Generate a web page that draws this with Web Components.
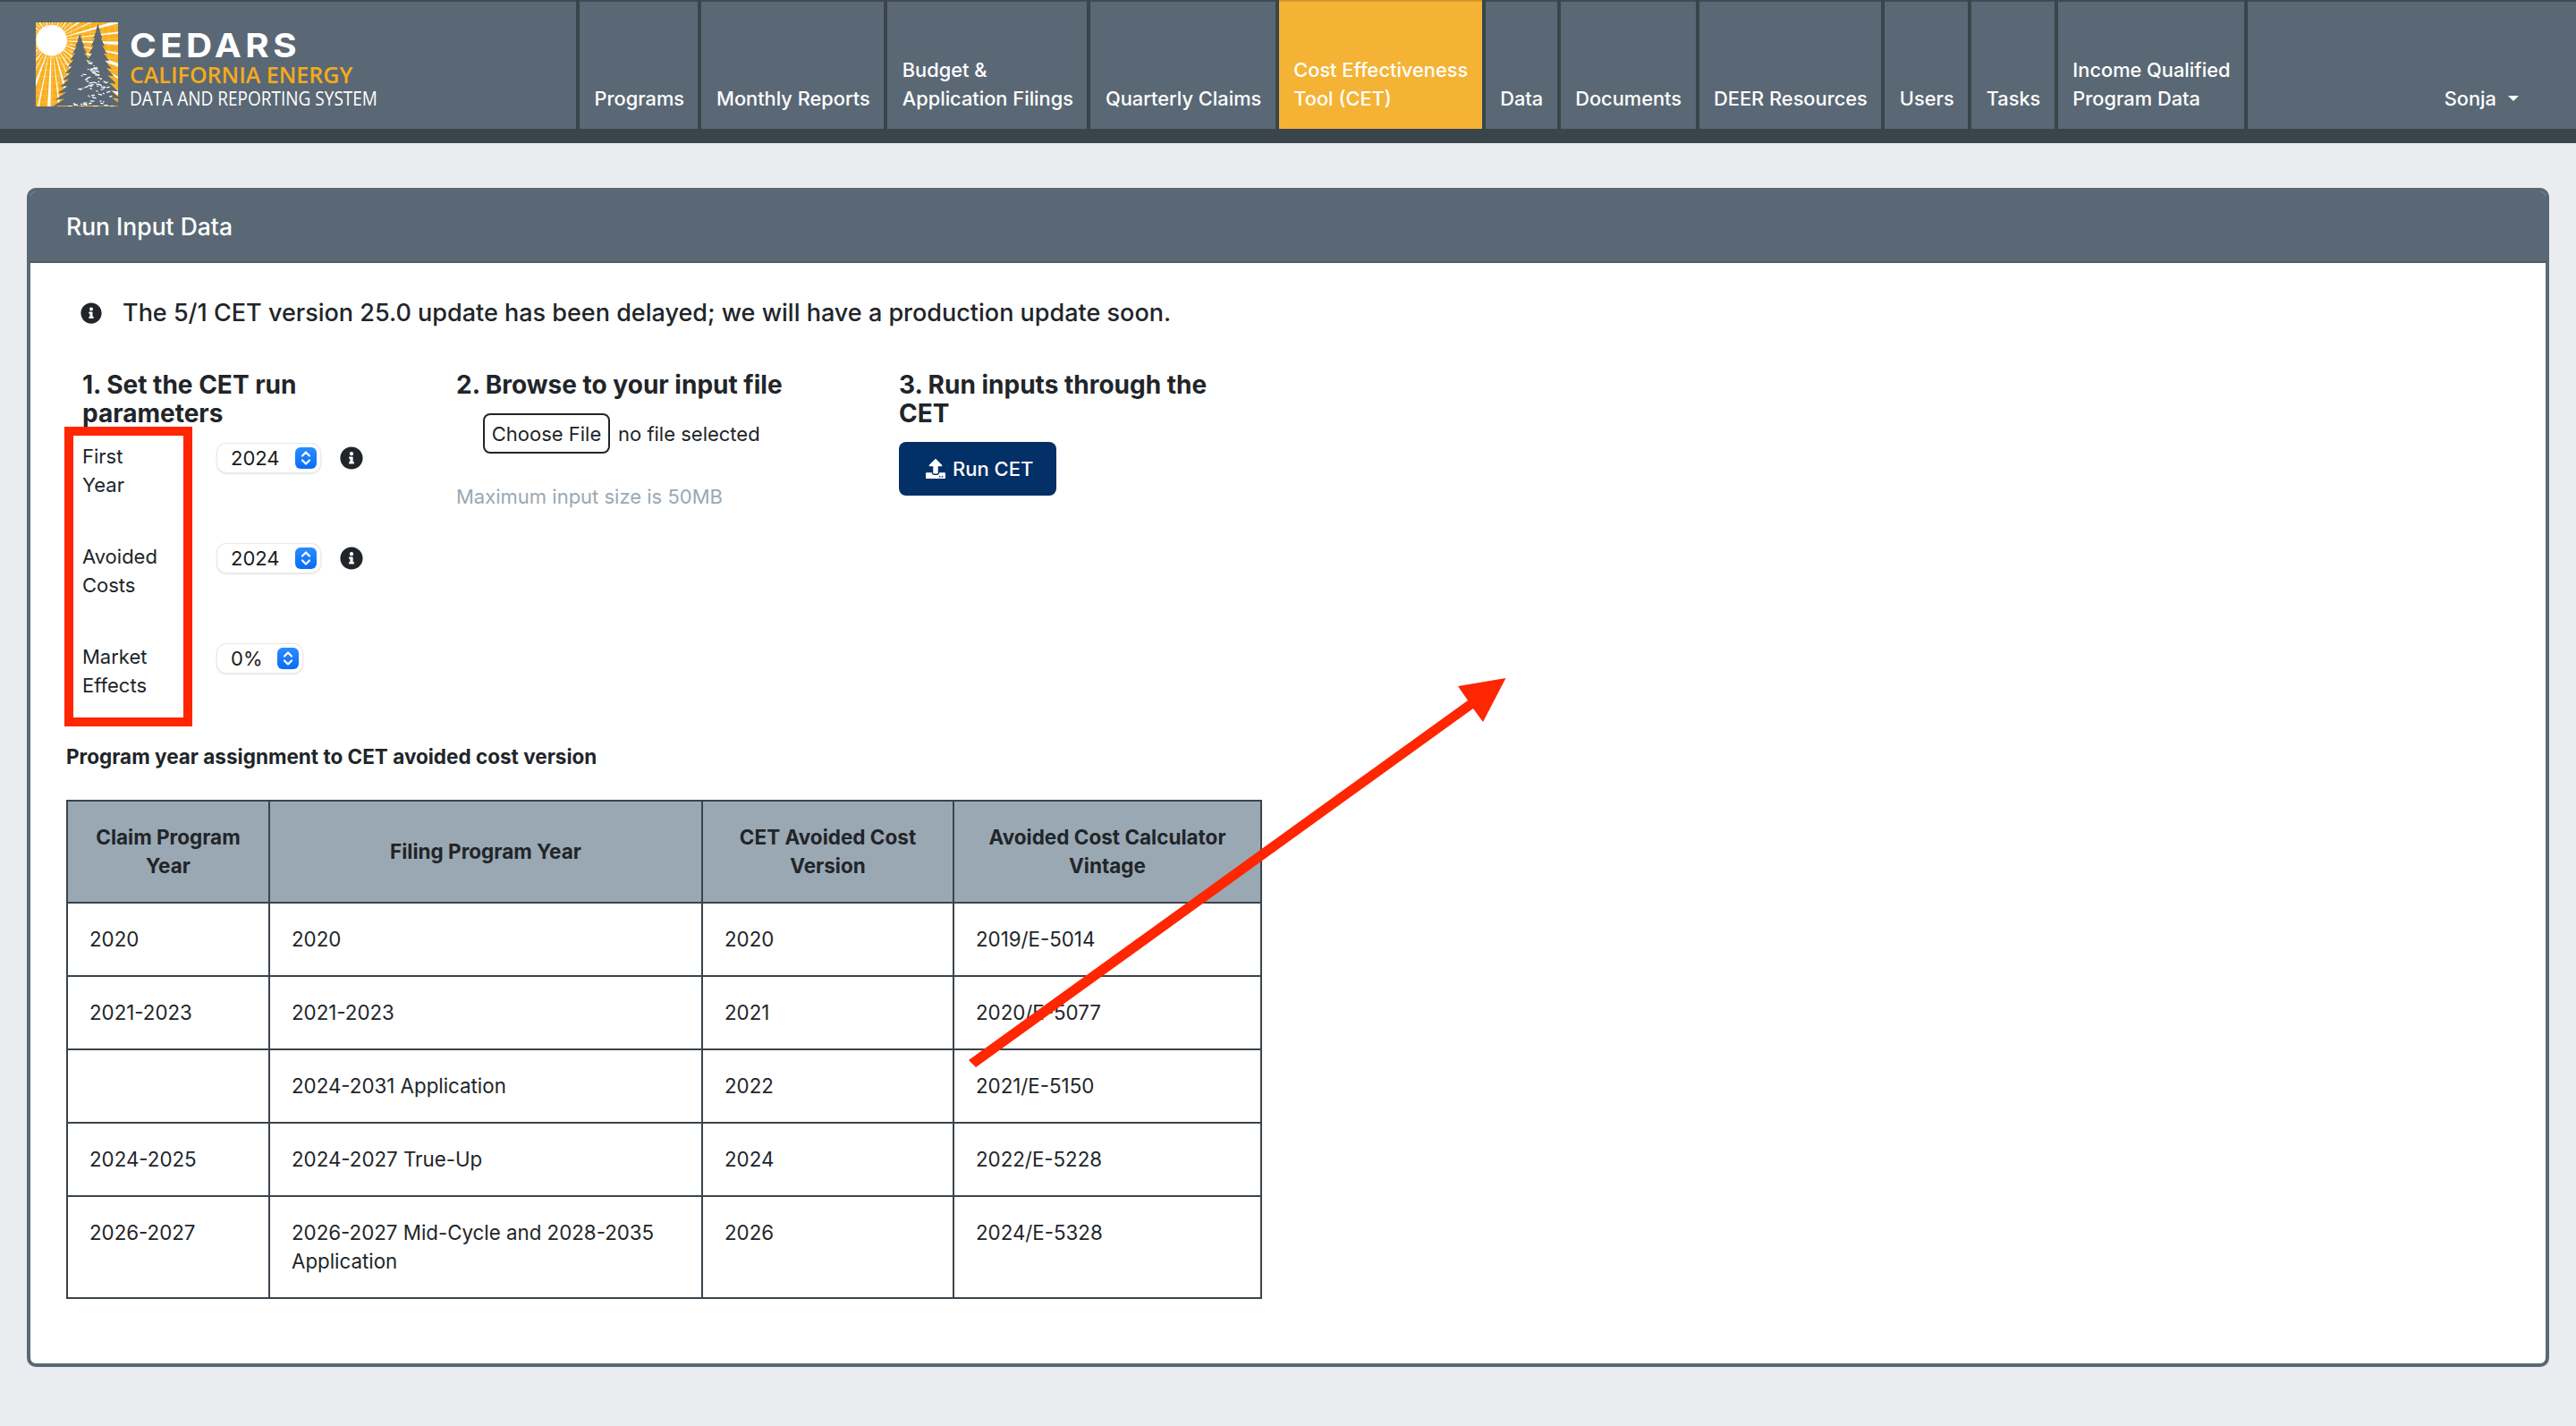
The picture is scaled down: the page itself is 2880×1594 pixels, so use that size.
<!DOCTYPE html>
<html>
<head>
<meta charset="utf-8">
<title>CEDARS - Run Input Data</title>
<style>
html, body { margin: 0; padding: 0; }
body {
  position: relative;
  min-height: 1594px;
  background: #ebecf0;
  color: #212529;
  font: 400 22px/32px Inter, "Liberation Sans", sans-serif;
}
</style>
</head>
<body>
<cedars-header>
  <nav-item>Programs</nav-item>
  <nav-item>Monthly Reports</nav-item>
  <nav-item>Budget &amp;<br>Application Filings</nav-item>
  <nav-item>Quarterly Claims</nav-item>
  <nav-item active>Cost Effectiveness<br>Tool (CET)</nav-item>
  <nav-item>Data</nav-item>
  <nav-item>Documents</nav-item>
  <nav-item>DEER Resources</nav-item>
  <nav-item>Users</nav-item>
  <nav-item>Tasks</nav-item>
  <nav-item>Income Qualified<br>Program Data</nav-item>
</cedars-header>

<run-card title="Run Input Data">
  <run-notice>The 5/1 CET version 25.0 update has been delayed; we will have a production update soon.</run-notice>
  <run-steps>
    <run-step slot="one" heading="1. Set the CET run parameters">
      <param-row label="First Year" value="2024" info></param-row>
      <param-row label="Avoided Costs" value="2024" info></param-row>
      <param-row label="Market Effects" value="0%"></param-row>
    </run-step>
    <run-step slot="two" heading="2. Browse to your input file">
      <file-picker></file-picker>
    </run-step>
    <run-step slot="three" heading="3. Run inputs through the CET">
      <run-button>Run CET</run-button>
    </run-step>
  </run-steps>
  <assignment-table></assignment-table>
</run-card>

<annotation-layer></annotation-layer>

<script>
const INFO_PATH = "M256 8C119.043 8 8 119.083 8 256c0 136.997 111.043 248 248 248s248-111.003 248-248C504 119.083 392.957 8 256 8zm0 110c23.196 0 42 18.804 42 42s-18.804 42-42 42-42-18.804-42-42 18.804-42 42-42zm56 254c0 6.627-5.373 12-12 12h-88c-6.627 0-12-5.373-12-12v-24c0-6.627 5.373-12 12-12h12v-64h-12c-6.627 0-12-5.373-12-12v-24c0-6.627 5.373-12 12-12h64c6.627 0 12 5.373 12 12v100h12c6.627 0 12 5.373 12 12v24z"
const UPLOAD_PATH = "M296 384h-80c-13.3 0-24-10.7-24-24V192h-87.7c-17.8 0-26.7-21.5-14.1-34.1L242.3 5.7c7.5-7.5 19.8-7.5 27.3 0l152.2 152.2c12.6 12.6 3.7 34.1-14.1 34.1H320v168c0 13.3-10.7 24-24 24zm216-8v112c0 13.3-10.7 24-24 24H24c-13.3 0-24-10.7-24-24V376c0-13.3 10.7-24 24-24h136v8c0 30.9 25.1 56 56 56h80c30.9 0 56-25.1 56-56v-8h136c13.3 0 24 10.7 24 24zm-124 88c0-11-9-20-20-20s-20 9-20 20 9 20 20 20 20-9 20-20zm64 0c0-11-9-20-20-20s-20 9-20 20 9 20 20 20 20-9 20-20z"

// Logo artwork: sun rays, grid and two jagged trees
function logoArt() {
  let rays = ""
  for (let i = 0; i < 40; i++) {
    const a = i * Math.PI / 20 + 0.04
    const w = i % 2 ? 0.012 : 0.024
    const r = 130
    const x1 = 17.5 + r * Math.cos(a - w), y1 = 20 + r * Math.sin(a - w)
    const x2 = 17.5 + r * Math.cos(a + w), y2 = 20 + r * Math.sin(a + w)
    rays += `<polygon points="17.5,20 ${x1.toFixed(1)},${y1.toFixed(1)} ${x2.toFixed(1)},${y2.toFixed(1)}" fill="#fff"/>`
  }
  let grid = ""
  for (let i = 4; i < 92; i += 7) {
    grid += `<path d="M${i} 0V93M0 ${i}H91" stroke="#fff" stroke-opacity=".35" stroke-width=".6"/>`
  }
  const tree = (cx, top, bottom, spread) => {
    let left = [], right = []
    const tiers = 11
    for (let i = 1; i <= tiers; i++) {
      const t = i / tiers
      const y = top + (bottom - top) * t
      const w = spread * t
      const back = w * 0.62
      right.push(`${(cx + w).toFixed(1)},${y.toFixed(1)}`, `${(cx + back).toFixed(1)},${(y - 1).toFixed(1)}`)
      left.unshift(`${(cx - back).toFixed(1)},${(y - 1).toFixed(1)}`, `${(cx - w).toFixed(1)},${y.toFixed(1)}`)
    }
    return `<polygon fill="#5a6875" points="${cx},${top} ${right.join(" ")} ${left.join(" ")}"/>`
  }
  let flecks = ""
  let seed = 11
  const rnd = () => (seed = (seed * 137 + 59) % 1009) / 1009
  for (let i = 0; i < 70; i++) {
    const y = 42 + rnd() * 50
    const x = 60 - (y - 30) * 0.35 + rnd() * (y - 30) * 0.8
    flecks += `<rect x="${x.toFixed(1)}" y="${y.toFixed(1)}" width="${(1 + rnd() * 4).toFixed(1)}" height="1.2" fill="#fff" transform="rotate(${(rnd() * 50 - 25).toFixed(0)} ${x.toFixed(1)} ${y.toFixed(1)})"/>`
  }
  return `<svg width="92" height="94" viewBox="0 0 91 93" part="logo">
    <rect width="91" height="93" fill="#f9ae1b"/>${grid}${rays}
    <circle cx="17.5" cy="20" r="17" fill="#fff"/>
    ${tree(68.7, 1.5, 93, 28)}${tree(48.7, 13, 93, 30)}
    ${flecks}
  </svg>`
}

class CedarsHeader extends HTMLElement {
  constructor() {
    super()
    const shadow = this.attachShadow({ mode: "open" })
    shadow.innerHTML = `
      <style>
        :host {
          display: flex;
          height: 160px;
          background: #3a444b;
          box-sizing: border-box;
        }
        .bar {
          flex: 1;
          display: flex;
          height: 144px;
          background: #5a6875;
          box-shadow: inset 0 2px 0 #3f4a52;
        }
        .brand {
          width: 644px;
          box-sizing: border-box;
          padding: 25px 0 0 40px;
          display: flex;
          gap: 13px;
          flex: none;
        }
        .brand svg { display: block; flex: none; }
        .words { color: #fff; white-space: nowrap; }
        .words span { display: block; transform-origin: left center; }
        .cedars {
          margin-top: 7px;
          font: 700 37px/37px Inter, "Liberation Sans", sans-serif;
          letter-spacing: 4px;
          transform: scaleX(1.09);
        }
        .california {
          margin-top: 2px;
          font: 600 25px/25px "Open Sans", "Liberation Sans", sans-serif;
          color: #f5ab1c;
        }
        .system {
          margin-top: 3px;
          font: 400 21px/23px "Open Sans", "Liberation Sans", sans-serif;
          transform: scaleX(.905);
        }
        nav { display: flex; }
        .user {
          flex: 1;
          border-left: 4px solid #3a444b;
          display: flex;
          justify-content: flex-end;
          align-items: flex-end;
          padding: 0 64px 18px 0;
          color: #fff;
          font: 500 21.8px/32px Inter, "Liberation Sans", sans-serif;
        }
        .caret {
          margin: 0 0 13px 13px;
          border-top: 6px solid #fff;
          border-left: 6px solid transparent;
          border-right: 6px solid transparent;
        }
      </style>
      <div class="bar">
        <div class="brand">
          ${logoArt()}
          <div class="words">
            <span class="cedars">CEDARS</span>
            <span class="california">CALIFORNIA ENERGY</span>
            <span class="system">DATA AND REPORTING SYSTEM</span>
          </div>
        </div>
        <nav><slot></slot></nav>
        <div class="user">Sonja<span class="caret"></span></div>
      </div>
    `
  }
}

class NavItem extends HTMLElement {
  constructor() {
    super()
    const shadow = this.attachShadow({ mode: "open" })
    shadow.innerHTML = `
      <style>
        :host {
          display: flex;
          align-items: flex-end;
          box-sizing: border-box;
          height: 144px;
          padding: 0 15.5px 18px 16.5px;
          border-left: 4px solid #3a444b;
          color: #fff;
          font: 500 21.8px/32px Inter, "Liberation Sans", sans-serif;
          white-space: nowrap;
        }
        :host([active]) {
          background: #f5b335;
          box-shadow: inset 0 2px 0 #d9982a;
        }
      </style>
      <div><slot></slot></div>
    `
  }
}

class RunCard extends HTMLElement {
  constructor() {
    super()
    const shadow = this.attachShadow({ mode: "open" })
    shadow.innerHTML = `
      <style>
        :host {
          display: block;
          box-sizing: border-box;
          margin: 50px 30px 0;
          height: 1318px;
          border: 4px solid #5a6875;
          border-radius: 10px;
          background: #fff;
          overflow: hidden;
        }
        header {
          box-sizing: border-box;
          height: 80px;
          padding: 0 0 0 40px;
          display: flex;
          align-items: center;
          background: #5a6875;
          border-bottom: 2px solid #4f5c68;
          color: #fff;
          font: 500 26.5px/32px Inter, "Liberation Sans", sans-serif;
        }
        .body { padding: 40px 40px 0; }
      </style>
      <header>${this.getAttribute("title")}</header>
      <div class="body"><slot></slot></div>
    `
  }
}

class RunNotice extends HTMLElement {
  constructor() {
    super()
    const shadow = this.attachShadow({ mode: "open" })
    shadow.innerHTML = `
      <style>
        :host {
          display: flex;
          align-items: center;
          gap: 23px;
          padding-left: 16px;
          font: 500 27px/32px Inter, "Liberation Sans", sans-serif;
          color: #212529;
        }
        svg { width: 24px; height: 24px; fill: #212529; flex: none; }
      </style>
      <svg viewBox="0 0 512 512"><path d="${INFO_PATH}"/></svg>
      <div><slot></slot></div>
    `
  }
}

class RunSteps extends HTMLElement {
  constructor() {
    super()
    const shadow = this.attachShadow({ mode: "open" })
    shadow.innerHTML = `
      <style>
        :host {
          display: grid;
          grid-template-columns: 418px 495px 375px;
          margin: 48px 0 0 18px;
        }
      </style>
      <slot name="one"></slot>
      <slot name="two"></slot>
      <slot name="three"></slot>
    `
  }
}

class RunStep extends HTMLElement {
  constructor() {
    super()
    const shadow = this.attachShadow({ mode: "open" })
    shadow.innerHTML = `
      <style>
        :host { display: block; }
        h3 {
          margin: 0;
          max-width: 375px;
          font: 700 28px/32px Inter, "Liberation Sans", sans-serif;
          color: #212529;
        }
      </style>
      <h3>${this.getAttribute("heading")}</h3>
      <slot></slot>
    `
  }
}

class ParamRow extends HTMLElement {
  constructor() {
    super()
    const shadow = this.attachShadow({ mode: "open" })
    const info = this.hasAttribute("info")
      ? `<svg class="info" viewBox="0 0 512 512"><path d="${INFO_PATH}"/></svg>` : ""
    shadow.innerHTML = `
      <style>
        :host {
          display: flex;
          align-items: flex-start;
          height: 112px;
          font: 400 22px/32px Inter, "Liberation Sans", sans-serif;
          color: #212529;
        }
        :host(:first-of-type) { margin-top: 16px; }
        .label { width: 151px; flex: none; padding-right: 60px; box-sizing: border-box; }
        cet-select { margin-top: 2px; }
        .info { width: 26px; height: 26px; fill: #212529; margin: 5px 0 0 22px; flex: none; }
      </style>
      <div class="label">${this.getAttribute("label")}</div>
      <cet-select value="${this.getAttribute("value")}"></cet-select>
      ${info}
    `
  }
}

class CetSelect extends HTMLElement {
  constructor() {
    super()
    const shadow = this.attachShadow({ mode: "open" })
    shadow.innerHTML = `
      <style>
        :host {
          display: flex;
          align-items: center;
          gap: 17px;
          box-sizing: border-box;
          height: 32px;
          padding: 0 4px 0 15px;
          border-radius: 10px;
          background: #fff;
          box-shadow: 0 0 0 1px #e9e9ec, 0 1px 3px rgba(0,0,0,.22);
          font: 400 22px/32px Inter, "Liberation Sans", sans-serif;
          color: #1b1b1b;
        }
        .stepper {
          width: 24px;
          height: 24px;
          border-radius: 6px;
          background: linear-gradient(#2c8cff, #0a6cf5);
          display: block;
        }
      </style>
      <span>${this.getAttribute("value")}</span>
      <svg class="stepper" viewBox="0 0 24 24">
        <path d="M8 9.5 12 5.5 16 9.5M8 14.5 12 18.5 16 14.5" fill="none" stroke="#fff" stroke-width="2.2" stroke-linecap="round" stroke-linejoin="round"/>
      </svg>
    `
  }
}

class FilePicker extends HTMLElement {
  constructor() {
    super()
    const shadow = this.attachShadow({ mode: "open" })
    shadow.innerHTML = `
      <style>
        :host {
          display: block;
          margin-top: 16px;
          font: 400 22px/32px Inter, "Liberation Sans", sans-serif;
          color: #212529;
        }
        .row {
          display: flex;
          align-items: center;
          gap: 9px;
          margin: 0 0 0 30px;
          height: 45px;
        }
        button {
          box-sizing: border-box;
          height: 45px;
          width: 142px;
          padding: 0;
          background: #fff;
          border: 2px solid #212529;
          border-radius: 8px;
          font: inherit;
          color: inherit;
        }
        .hint { margin-top: 32px; color: #9aa8b4; }
      </style>
      <div class="row"><button>Choose File</button><span>no file selected</span></div>
      <div class="hint">Maximum input size is 50MB</div>
    `
  }
}

class RunButton extends HTMLElement {
  constructor() {
    super()
    const shadow = this.attachShadow({ mode: "open" })
    shadow.innerHTML = `
      <style>
        :host {
          display: inline-flex;
          align-items: center;
          gap: 8px;
          box-sizing: border-box;
          height: 60px;
          width: 176px;
          margin-top: 16px;
          padding-left: 30px;
          border-radius: 8px;
          background: #023067;
          color: #fff;
          font: 500 22px/32px Inter, "Liberation Sans", sans-serif;
        }
        svg { width: 22px; height: 22px; fill: #fff; flex: none; }
      </style>
      <svg viewBox="0 0 512 512"><path d="${UPLOAD_PATH}"/></svg>
      <span><slot></slot></span>
    `
  }
}

class AssignmentTable extends HTMLElement {
  constructor() {
    super()
    const shadow = this.attachShadow({ mode: "open" })
    const head = ["Claim Program Year", "Filing Program Year", "CET Avoided Cost Version", "Avoided Cost Calculator Vintage"]
    const rows = [
      ["2020", "2020", "2020", "2019/E-5014"],
      ["2021-2023", "2021-2023", "2021", "2020/E-5077"],
      ["", "2024-2031 Application", "2022", "2021/E-5150"],
      ["2024-2025", "2024-2027 True-Up", "2024", "2022/E-5228"],
      ["2026-2027", "2026-2027 Mid-Cycle and 2028-2035 Application", "2026", "2024/E-5328"],
    ]
    shadow.innerHTML = `
      <style>
        :host {
          display: block;
          font: 400 22.3px/32px Inter, "Liberation Sans", sans-serif;
          color: #212529;
        }
        h4 { margin: 0 0 32px; font: 700 22.5px/32px Inter, "Liberation Sans", sans-serif; }
        table {
          border-collapse: collapse;
          table-layout: fixed;
          width: 1335px;
        }
        th, td {
          border: 2px solid #3a444b;
          padding: 24px;
          vertical-align: top;
          text-align: left;
        }
        th {
          background: #9aa8b3;
          text-align: center;
          vertical-align: middle;
          font-weight: 700;
          font-size: 22.5px;
          padding: 24px 22px;
        }
      </style>
      <h4>Program year assignment to CET avoided cost version</h4>
      <table>
        <colgroup><col style="width:226px"><col style="width:484px"><col style="width:281px"><col style="width:344px"></colgroup>
        <thead><tr>${head.map(h => `<th>${h}</th>`).join("")}</tr></thead>
        <tbody>${rows.map(r => `<tr>${r.map(c => `<td>${c}</td>`).join("")}</tr>`).join("")}</tbody>
      </table>
    `
  }
}

// Red markup drawn on top of the screenshot
class AnnotationLayer extends HTMLElement {
  constructor() {
    super()
    const shadow = this.attachShadow({ mode: "open" })
    shadow.innerHTML = `
      <style>
        :host { position: absolute; left: 0; top: 0; width: 2880px; height: 1594px; pointer-events: none; }
        svg { display: block; }
      </style>
      <svg width="2880" height="1594" viewBox="0 0 2880 1594">
        <rect x="77" y="482" width="133" height="325" fill="none" stroke="#ff2600" stroke-width="10"/>
        <polygon fill="#ff2600" points="1083,1185 1641,783 1630,767 1683.5,758 1658,807 1647,792 1091,1193"/>
      </svg>
    `
  }
}

customElements.define("cedars-header", CedarsHeader)
customElements.define("nav-item", NavItem)
customElements.define("run-card", RunCard)
customElements.define("run-notice", RunNotice)
customElements.define("run-steps", RunSteps)
customElements.define("run-step", RunStep)
customElements.define("param-row", ParamRow)
customElements.define("cet-select", CetSelect)
customElements.define("file-picker", FilePicker)
customElements.define("run-button", RunButton)
customElements.define("assignment-table", AssignmentTable)
customElements.define("annotation-layer", AnnotationLayer)
</script>
</body>
</html>
